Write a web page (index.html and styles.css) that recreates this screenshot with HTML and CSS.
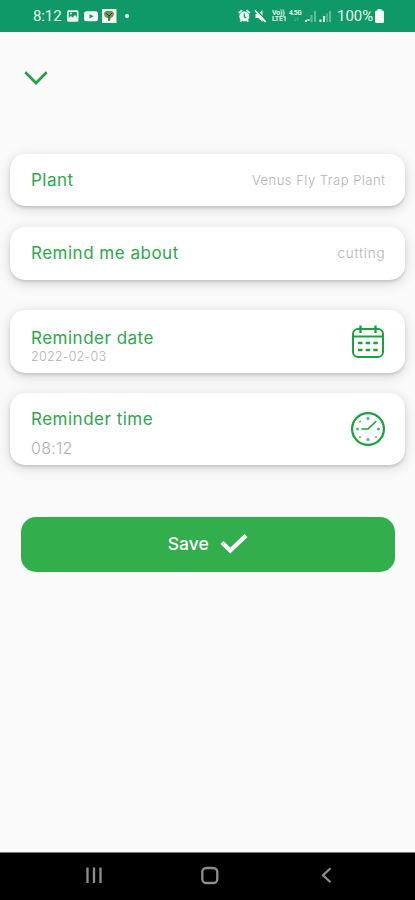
FILE: index.html
```html
<!DOCTYPE html>
<html lang="en">
<head>
<meta charset="utf-8">
<title>Reminder</title>
<link rel="stylesheet" href="styles.css">
</head>
<body>
<div class="phone">
  <header class="status">
    <span class="clock">8:12</span>
    <svg class="notif" width="66" height="16" viewBox="0 0 66 16">
      <rect x="1" y="2.2" width="11.5" height="11.5" rx="1.5" fill="#e7f6f0"/>
      <path d="M2.8 4h8v5l-2-2-2 2.5L4.800 8l-2 2z" fill="#0f9868"/>
      <circle cx="5" cy="5.500" r="1" fill="#e7f6f0"/>
      <rect x="18" y="3.300" width="14" height="10" rx="2.500" fill="#f2fbf7"/>
      <path d="M23.500 6v4.600l4-2.300z" fill="#0f9868"/>
      <rect x="36" y="1" width="14.500" height="14" fill="#f3f8ee"/>
      <path d="M38 5q2-3 5-2 4-1 5 3-1 4-3.500 4l-.5 3h-2l.3-3Q38 10 38 5z" fill="#6a925b"/>
      <path d="M40 5l3 3 3-3M43 8v4" stroke="#2e4b2c" fill="none"/>
      <circle cx="61" cy="8" r="2.100" fill="#e7f6f0"/>
    </svg>
    <div class="system">
      <svg width="28" height="16" viewBox="0 0 28 16" fill="#eefaf5">
        <circle cx="6.300" cy="8.500" r="5"/>
        <path d="M0 4.500L3.500 1.500l1.200 1.300-3.500 3zM12.500 4.500L9 1.500 7.800 2.800l3.500 3zM1.500 13l2-2 1.500 1-2 2zM11 13l-2-2-1.500 1 2 2z"/>
        <path d="M6.300 5.500v3.300l2 1.200" stroke="#0f9868" stroke-width="1.200" fill="none"/>
        <path d="M17.500 6h2.800l4.200-4v12l-4.200-4h-2.800z"/>
        <path d="M18.500 2l9.500 10" stroke="#0f9868" stroke-width="1.200"/>
        <path d="M17 2.500l10.500 11.300" stroke="#eefaf5" stroke-width="1.700"/>
      </svg>
      <span class="net volte">Vo))<br>LTE1</span>
      <span class="net speed">4.5G<small>↓↑</small></span>
      <svg class="bars" width="28" height="16" viewBox="0 0 28 16">
        <path d="M1 13h2M4.500 13v-2" stroke="#eefaf5" stroke-width="2"/>
        <path d="M7.500 14V7M11 14V3M26 14V3" stroke="#63bb9b" stroke-width="2"/>
        <path d="M16.500 14v-2.500M20 14V8" stroke="#eefaf5" stroke-width="2"/>
        <path d="M23 14V5.500" stroke="#63bb9b" stroke-width="1.500"/>
      </svg>
      <span class="percent">100%</span>
      <svg width="9" height="14" viewBox="0 0 9 14"><path d="M2.500 0h4v1.500h1q1.500 0 1.500 1.500v9.500q0 1.500-1.500 1.500h-6Q0 14 0 12.500V3q0-1.500 1.500-1.500h1z" fill="#f2fbf7"/></svg>
    </div>
  </header>
  <main>
    <svg class="back" width="24" height="15" viewBox="0 0 24 15"><path d="M1.300 1.300L12 12l10.700-10.700" fill="none" stroke="#21a344" stroke-width="2.700"/></svg>
    <section class="card plant"><span class="label">Plant</span><span class="value">Venus Fly Trap Plant</span></section>
    <section class="card about"><span class="label">Remind me about</span><span class="value cutting">cutting</span></section>
    <section class="card date">
      <div class="stack"><span class="label">Reminder date</span><span class="sub">2022-02-03</span></div>
      <svg class="calendar" width="34" height="34" viewBox="0 0 34 34" fill="none" stroke="#1ba23d" stroke-width="2">
        <rect x="2" y="4" width="30" height="28" rx="5"/>
        <path d="M2 11.500h30" />
        <path d="M9.500 .5v7.500M24.500 .5v7.500" stroke-width="2.300"/>
        <path d="M7 18h4.500M14.700 18h4.500M22.300 18h4.500M7 25h4.500M14.700 25h4.500M22.300 25h4.500" stroke-width="2.300"/>
      </svg>
    </section>
    <section class="card time">
      <div class="stack"><span class="label">Reminder time</span><span class="sub">08:12</span></div>
      <svg class="watch" width="36" height="36" viewBox="0 0 36 36" fill="none" stroke="#1ba23d">
        <circle cx="18" cy="18" r="15.900" stroke-width="2.300"/>
        <path d="M11.500 18H18l8.300-8" stroke-width="1.700"/>
        <g fill="#4fb969" stroke="none"><circle cx="18" cy="7.500" r="1.600"/><circle cx="18" cy="28.500" r="1.600"/><circle cx="7.500" cy="18" r="1.500"/><circle cx="28.500" cy="18" r="1.600"/><circle cx="10" cy="10.500" r="1"/><circle cx="10" cy="26" r="1"/><circle cx="26" cy="26" r="1"/></g>
      </svg>
    </section>
    <button class="save"><span>Save</span><svg width="28" height="21" viewBox="0 0 28 21"><path d="M2 9.500l8.300 8L26 2.500" fill="none" stroke="#fff" stroke-width="4.200"/></svg></button>
  </main>
  <nav class="nav">
    <svg width="415" height="47" viewBox="0 0 415 47" fill="none" stroke="#8e8e8e">
      <path d="M87.500 14.500V30M94 14.500V30M100.500 14.500V30" stroke-width="2.300"/>
      <rect x="202.300" y="15" width="15" height="15" rx="4" stroke-width="2.300"/>
      <path d="M330.500 15.300l-7.500 7 7.500 7" stroke-width="2.200"/>
    </svg>
  </nav>
</div>
</body>
</html>
```
FILE: styles.css
```css
* { box-sizing: border-box; }
body { margin: 0; font-family: Inter, Roboto, "Liberation Sans", sans-serif; }
.phone { width: 415px; height: 900px; display: flex; flex-direction: column; background: #fafafa; overflow: hidden; }
.status { height: 32px; flex: none; background: #0f9868; color: #e7f6f0; display: flex; align-items: center; padding: 0 31px 0 33px; font-family: Roboto, sans-serif; }
.clock { font-size: 15px; letter-spacing: -.1px; width: 33px; }
.notif { flex: none; }
.system { margin-left: auto; display: flex; align-items: center; }
.net { font-size: 7px; line-height: 6.500px; font-weight: 700; }
.volte { width: 15px; margin-left: 6px; letter-spacing: -.2px; }
.speed { width: 14px; margin-left: 2px; letter-spacing: -.4px; font-size: 6.500px; }
.speed small { display: block; font-size: 6px; text-align: center; opacity: .6; }
.bars { margin: 0 5px 0 1px; }
.percent { font-size: 15px; width: 38px; }
main { flex: 1; display: flex; flex-direction: column; padding: 0 10px; }
.back { margin: 39px 0 68px 13.500px; flex: none; }
.card { flex: none; background: #fff; border-radius: 15px; padding: 0 20px 0 21px; display: flex; align-items: center; justify-content: space-between; box-shadow: 0 2px 3px rgba(0,0,0,.13), 0 3px 13px rgba(0,0,0,.15); }
.label { font-size: 17px; line-height: 20px; color: #2da84b; letter-spacing: .5px; white-space: nowrap; }
.value { font-size: 13px; line-height: 18px; color: #b3b3b3; letter-spacing: .5px; font-weight: 300; margin-right: -.5px; }
.plant { height: 52px; }
.about { height: 53px; margin-top: 21px; padding-bottom: 1px; }
.cutting { font-size: 13.500px; letter-spacing: .8px; }
.date { height: 63px; margin-top: 30px; }
.time { height: 72px; margin-top: 20px; }
.stack { display: flex; flex-direction: column; }
.sub { color: #b0b0b0; font-size: 12.500px; line-height: 14px; letter-spacing: .25px; font-weight: 300; margin-top: 2px; }
.date .stack { padding-top: 9px; }
.time .stack { padding-top: 9px; }
.time .sub { font-size: 16px; line-height: 20px; margin-top: 9px; }
.watch { margin-right: -1px; }
.save { height: 55px; flex: none; margin: 52px 10.500px 0 11px; border: 0; border-radius: 15px; background: #32ae4d; color: #fff; font: 500 17.500px Inter, sans-serif; display: flex; align-items: center; justify-content: center; gap: 11px; padding: 0 0 2px; }
.nav { height: 48px; flex: none; background: #000; border-top: 1px solid #777; }
.nav svg { display: block; }
```
